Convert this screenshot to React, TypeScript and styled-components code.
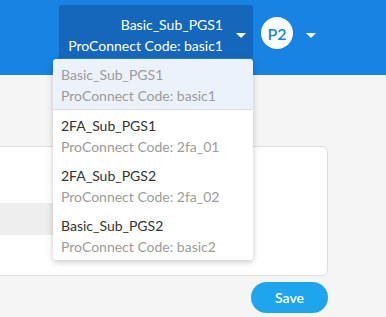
import React from 'react';
import styled, { createGlobalStyle } from 'styled-components';

const accounts = [
  { name: 'Basic_Sub_PGS1', code: 'basic1' },
  { name: '2FA_Sub_PGS1', code: '2fa_01' },
  { name: '2FA_Sub_PGS2', code: '2fa_02' },
  { name: 'Basic_Sub_PGS2', code: 'basic2' },
];

function Caret() {
  return (
    <svg width="10" height="5" viewBox="0 0 10 5">
      <path d="M0 0 L10 0 L5 5 Z" fill="#fff" />
    </svg>
  );
}

function App() {
  const current = accounts[0];
  return (
    <>
      <GlobalStyle />
      <Page>
        <Header>
          <AccountWrap>
            <AccountButton>
              <AccountText>
                <div>{current.name}</div>
                <div>ProConnect Code: {current.code}</div>
              </AccountText>
              <CaretBox $top={19}>
                <Caret />
              </CaretBox>
            </AccountButton>
            <Menu>
              {accounts.map((a, i) => (
                <MenuItem key={a.name} $selected={i === 0}>
                  <ItemName $selected={i === 0}>{a.name}</ItemName>
                  <ItemCode>ProConnect Code: {a.code}</ItemCode>
                </MenuItem>
              ))}
            </Menu>
          </AccountWrap>
          <Avatar>P2</Avatar>
          <CaretBox $top={33}>
            <Caret />
          </CaretBox>
        </Header>
        <Body>
          <Card>
            <CardRow />
          </Card>
          <Actions>
            <SaveButton>Save</SaveButton>
          </Actions>
        </Body>
      </Page>
    </>
  );
}

export default App;

const GlobalStyle = createGlobalStyle`
  html, body {
    margin: 0;
    padding: 0;
    background: #f5f5f5;
  }
  body {
    font-family: Lato, "Open Sans", sans-serif;
  }
`;

const Page = styled.div`
  width: 386px;
  height: 317px;
  overflow: hidden;
  background: #f5f5f5;
`;

const Header = styled.div`
  display: flex;
  align-items: flex-start;
  height: 75px;
  padding-left: 59px;
  background: #1883e2;
  box-sizing: border-box;
`;

const AccountWrap = styled.div`
  position: relative;
  margin-top: 5px;
`;

const AccountButton = styled.div`
  display: flex;
  align-items: flex-start;
  justify-content: flex-end;
  width: 194px;
  height: 53px;
  padding: 9px 7px 0 0;
  box-sizing: border-box;
  background: #1467bb;
  border-radius: 3px 3px 0 0;
  color: #fff;
`;

const AccountText = styled.div`
  text-align: right;
  font-size: 14px;
  line-height: 21px;
`;

const CaretBox = styled.div<{ $top: number }>`
  display: flex;
  margin-left: 13px;
  margin-top: ${(p) => p.$top}px;
`;

const Menu = styled.div`
  position: absolute;
  top: 54px;
  left: -6px;
  width: 200px;
  background: #fff;
  border-radius: 4px;
  box-shadow: 0 2px 6px rgba(0, 0, 0, 0.22);
  overflow: hidden;
  z-index: 10;
`;

const MenuItem = styled.div<{ $selected?: boolean }>`
  height: 45px;
  padding: 5px 8px 0;
  font-size: 14px;
  line-height: 21px;
  background: ${(p) => (p.$selected ? '#ecf2fc' : '#fff')};
  border-bottom: ${(p) => (p.$selected ? '1px solid #dcdcdc' : 'none')};
`;

const ItemName = styled.div<{ $selected?: boolean }>`
  color: ${(p) => (p.$selected ? '#9b9b9b' : '#333')};
`;

const ItemCode = styled.div`
  color: #9b9b9b;
`;

const Avatar = styled.div`
  display: flex;
  align-items: center;
  justify-content: center;
  width: 32px;
  height: 32px;
  margin: 17px 0 0 8px;
  border-radius: 50%;
  background: #fff;
  color: #1883e2;
  font-size: 16px;
  font-weight: 600;
`;

const Body = styled.div`
  padding-top: 71px;
`;

const Card = styled.div`
  width: 338px;
  height: 130px;
  margin-left: -10px;
  padding-top: 56px;
  box-sizing: border-box;
  background: #fff;
  border: 1px solid #dedede;
  border-radius: 6px;
`;

const CardRow = styled.div`
  width: 220px;
  height: 32px;
  background: #eeeeee;
`;

const Actions = styled.div`
  display: flex;
  justify-content: flex-end;
  padding: 6px 58px 0 0;
`;

const SaveButton = styled.button`
  width: 77px;
  height: 31px;
  border: none;
  border-radius: 16px;
  background: #1ea5ee;
  color: #fff;
  font-family: Lato, "Open Sans", sans-serif;
  font-size: 14px;
  font-weight: 600;
  padding: 0;
`;
